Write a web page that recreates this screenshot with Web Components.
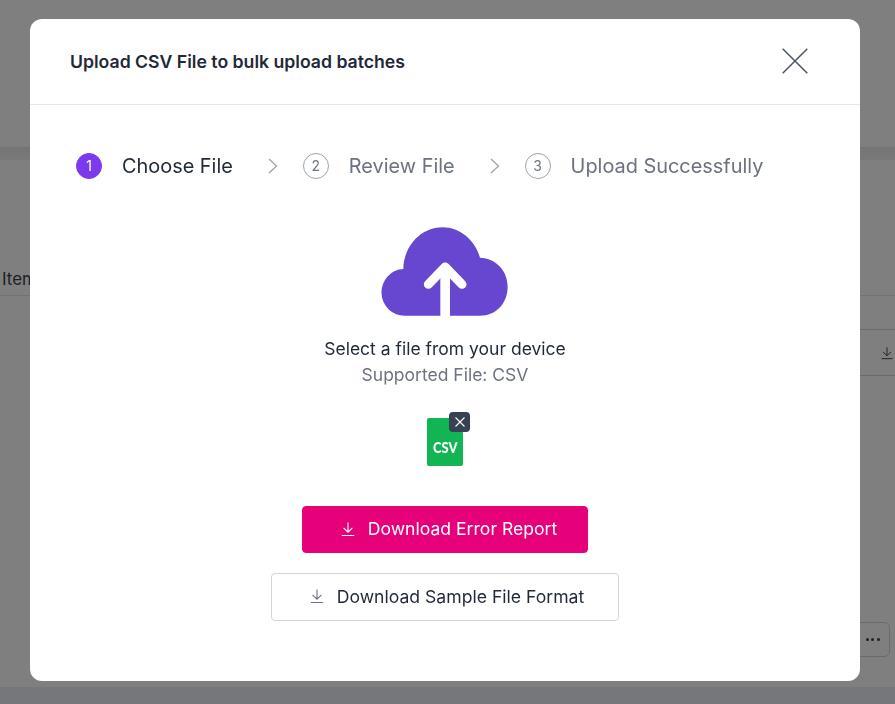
<!DOCTYPE html>
<html lang="en">
<head>
<meta charset="utf-8">
<title>Upload CSV</title>
<style>
    html, body { margin: 0; height: 100%; overflow: hidden; }
    body { font-family: 'Inter', 'Liberation Sans', sans-serif; background: #fff; }
</style>
</head>
<body>
<batch-page></batch-page>
<upload-modal heading="Upload CSV File to bulk upload batches">
    <step-item slot="steps" number="1" active>Choose File</step-item>
    <step-item slot="steps" number="2" arrow>Review File</step-item>
    <step-item slot="steps" number="3" arrow>Upload Successfully</step-item>
    <file-drop>
        <span>Select a file from your device</span>
        <span slot="hint">Supported File: CSV</span>
    </file-drop>
    <csv-thumb></csv-thumb>
    <action-button variant="primary">Download Error Report</action-button>
    <action-button>Download Sample File Format</action-button>
</upload-modal>

<script>
const downloadIcon = `
    <svg viewBox="0 0 16 16" width="16" height="16" fill="none" stroke="currentColor" stroke-width="1.1">
        <path d="M8 1.5V11M3.6 6.8 8 11.2l4.4-4.4M1.8 14.5h12.4"/>
    </svg>`;

// what stays visible behind the modal
class BatchPage extends HTMLElement {
    constructor() {
        super();
        this.attachShadow({ mode: 'open' });
        this.shadowRoot.innerHTML = `
            <style>
            :host {
                display: flex;
                flex-direction: column;
                height: 704px;
                color: #374151;
                background: #fff;
                font-size: 17px;
            }
            .top {
                height: 147px;
                flex: none;
            }
            .band {
                height: 13px;
                flex: none;
                background: linear-gradient(#ebebeb, #f3f3f3);
                border-top: 1px solid #e5e7eb;
                box-sizing: border-box;
            }
            .tabs {
                height: 136px;
                flex: none;
                box-sizing: border-box;
                border-bottom: 1px solid #e5e7eb;
                display: flex;
                align-items: flex-end;
                padding: 0 0 6px 2px;
            }
            .filters {
                height: 79px;
                flex: none;
                padding-top: 33px;
                box-sizing: border-box;
                display: flex;
                justify-content: flex-end;
            }
            .export {
                width: 300px;
                height: 47px;
                margin-right: -10px;
                border: 1px solid #d1d5db;
                border-radius: 4px;
                box-sizing: border-box;
                display: flex;
                align-items: center;
                justify-content: flex-end;
                padding-right: 10px;
            }
            .export svg { width: 14px; height: 14px; }
            .table { flex: 1; display: flex; justify-content: flex-end; align-items: flex-start; padding: 247px 5px 0 0; }
            .more {
                width: 70px;
                height: 35px;
                border: 1px solid #d1d5db;
                border-radius: 6px;
                box-sizing: border-box;
                display: flex;
                align-items: center;
                justify-content: flex-end;
                gap: 2.500px;
                padding-right: 9.500px;
            }
            .more i { width: 3px; height: 3px; border-radius: 50%; background: #374151; }
            .foot { height: 17px; flex: none; background: #ebeff5; }
            </style>
            <div class="top"></div>
            <div class="band"></div>
            <div class="tabs">Item</div>
            <div class="filters">
                <div class="export">${downloadIcon}</div>
            </div>
            <div class="table"><div class="more"><i></i><i></i><i></i></div></div>
            <div class="foot"></div>
        `;
    }
}

class UploadModal extends HTMLElement {
    constructor() {
        super();
        this.attachShadow({ mode: 'open' });
        this.shadowRoot.innerHTML = `
            <style>
            :host {
                position: fixed;
                inset: 0;
                display: block;
                background: rgba(0, 0, 0, 0.5);
                padding: 19px 0 0 30px;
                box-sizing: border-box;
            }
            .dialog {
                width: 830px;
                height: 662px;
                background: #fff;
                border-radius: 12px;
                display: flex;
                flex-direction: column;
            }
            header {
                height: 86px;
                flex: none;
                box-sizing: border-box;
                border-bottom: 1px solid #e5e7eb;
                display: flex;
                align-items: center;
                justify-content: space-between;
                padding: 0 52px 2px 40px;
            }
            h2 {
                margin: 2px 0 0;
                font-size: 17.650px;
                font-weight: 600;
                color: #1f2937;
            }
            .steps {
                display: flex;
                align-items: center;
                padding: 48px 0 0 46px;
            }
            .body {
                display: flex;
                flex-direction: column;
                align-items: center;
            }
            </style>
            <div class="dialog">
                <header>
                    <h2></h2>
                    <svg viewBox="0 0 26 26" width="26" height="26" fill="none" stroke="#4b5563" stroke-width="1.5">
                        <path d="M.7.7l24.6 24.6M25.3.7.7 25.3"/>
                    </svg>
                </header>
                <div class="steps"><slot name="steps"></slot></div>
                <div class="body"><slot></slot></div>
            </div>
        `;
    }

    connectedCallback() {
        this.shadowRoot.querySelector('h2').textContent = this.getAttribute('heading');
    }
}

class StepItem extends HTMLElement {
    constructor() {
        super();
        this.attachShadow({ mode: 'open' });
        this.shadowRoot.innerHTML = `
            <style>
            :host {
                display: flex;
                align-items: center;
                font-size: 19.900px;
                line-height: 26px;
                color: #6b7280;
            }
            :host([active]) { color: #1f2937; }
            .chevron { display: none; margin: 0 25px 0 35px; }
            :host([arrow]) .chevron { display: block; }
            .num {
                width: 26px;
                height: 26px;
                box-sizing: border-box;
                border: 1px solid #9ca3af;
                border-radius: 50%;
                display: flex;
                align-items: center;
                justify-content: center;
                font-size: 14px;
                color: #6b7280;
                margin-right: 20px;
            }
            :host([active]) .num {
                background: #7c3aed;
                border-color: #7c3aed;
                color: #fff;
            }
            </style>
            <svg class="chevron" viewBox="0 0 10 16" width="10" height="16" fill="none" stroke="#9ca3af" stroke-width="1.3">
                <path d="M1 1l7.5 7L1 15"/>
            </svg>
            <span class="num"></span>
            <slot></slot>
        `;
    }

    connectedCallback() {
        this.shadowRoot.querySelector('.num').textContent = this.getAttribute('number');
    }
}

class FileDrop extends HTMLElement {
    constructor() {
        super();
        this.attachShadow({ mode: 'open' });
        this.shadowRoot.innerHTML = `
            <style>
            :host {
                display: flex;
                flex-direction: column;
                align-items: center;
                padding-top: 47px;
                font-size: 17.500px;
                line-height: 26px;
                color: #1f2937;
            }
            svg { display: block; margin: -6px 0 11px; }
            .hint { color: #6b7280; }
            </style>
            <svg viewBox="0 0 450 315" width="150" height="105">
                <path fill="#6847d0" d="M105 287A68 70 0 0 1 100 147C102 75 155 22 218 22C270 22 315 60 330 113C378 115 413 152 413 200C413 250 378 287 330 287Z"/>
                <path fill="none" stroke="#fff" stroke-width="29" d="M225.500 150V288"/>
                <path fill="none" stroke="#fff" stroke-width="27" stroke-linecap="round" stroke-linejoin="round" d="M175 193 225.500 141 276 193"/>
            </svg>
            <slot></slot>
            <span class="hint"><slot name="hint"></slot></span>
        `;
    }
}

class CsvThumb extends HTMLElement {
    constructor() {
        super();
        this.attachShadow({ mode: 'open' });
        this.shadowRoot.innerHTML = `
            <style>
            :host {
                display: block;
                position: relative;
                width: 36px;
                height: 48px;
                margin: 30px 0 40px;
            }
            .sheet {
                height: 100%;
                background: #11b552;
                border-radius: 2px;
                box-sizing: border-box;
                display: flex;
                align-items: flex-end;
                justify-content: center;
                padding-bottom: 11px;
                color: #fff;
                font: 900 15px/16px 'Lato', sans-serif;
            }
            .sheet span { display: inline-block; transform: scaleX(0.86); }
            .close {
                position: absolute;
                top: -6px;
                right: -7px;
                width: 21px;
                height: 20px;
                border-radius: 4px;
                background: #374151;
                display: flex;
                align-items: center;
                justify-content: center;
            }
            </style>
            <div class="sheet"><span>CSV</span></div>
            <div class="close">
                <svg viewBox="0 0 10 10" width="10" height="10" fill="none" stroke="#fff" stroke-width="1.1">
                    <path d="M.5.5l9 9M9.500.5l-9 9"/>
                </svg>
            </div>
        `;
    }
}

class ActionButton extends HTMLElement {
    constructor() {
        super();
        this.attachShadow({ mode: 'open' });
        this.shadowRoot.innerHTML = `
            <style>
            :host {
                display: flex;
                align-items: center;
                gap: 12px;
                height: 48px;
                padding: 0 34px 2px 37px;
                box-sizing: border-box;
                border: 1px solid #d1d5db;
                border-radius: 4px;
                background: #fff;
                color: #1f2937;
                font-size: 17.600px;
                margin-bottom: 20px;
            }
            svg { color: #6b7280; }
            :host([variant="primary"]) {
                background: #e6007a;
                border-color: #e6007a;
                color: #fff;
                height: 47px;
                padding: 0 30px 2px 37px;
            }
            :host([variant="primary"]) svg { color: #fff; }
            </style>
            ${downloadIcon}
            <slot></slot>
        `;
    }
}

customElements.define('batch-page', BatchPage);
customElements.define('upload-modal', UploadModal);
customElements.define('step-item', StepItem);
customElements.define('file-drop', FileDrop);
customElements.define('csv-thumb', CsvThumb);
customElements.define('action-button', ActionButton);
</script>
</body>
</html>
